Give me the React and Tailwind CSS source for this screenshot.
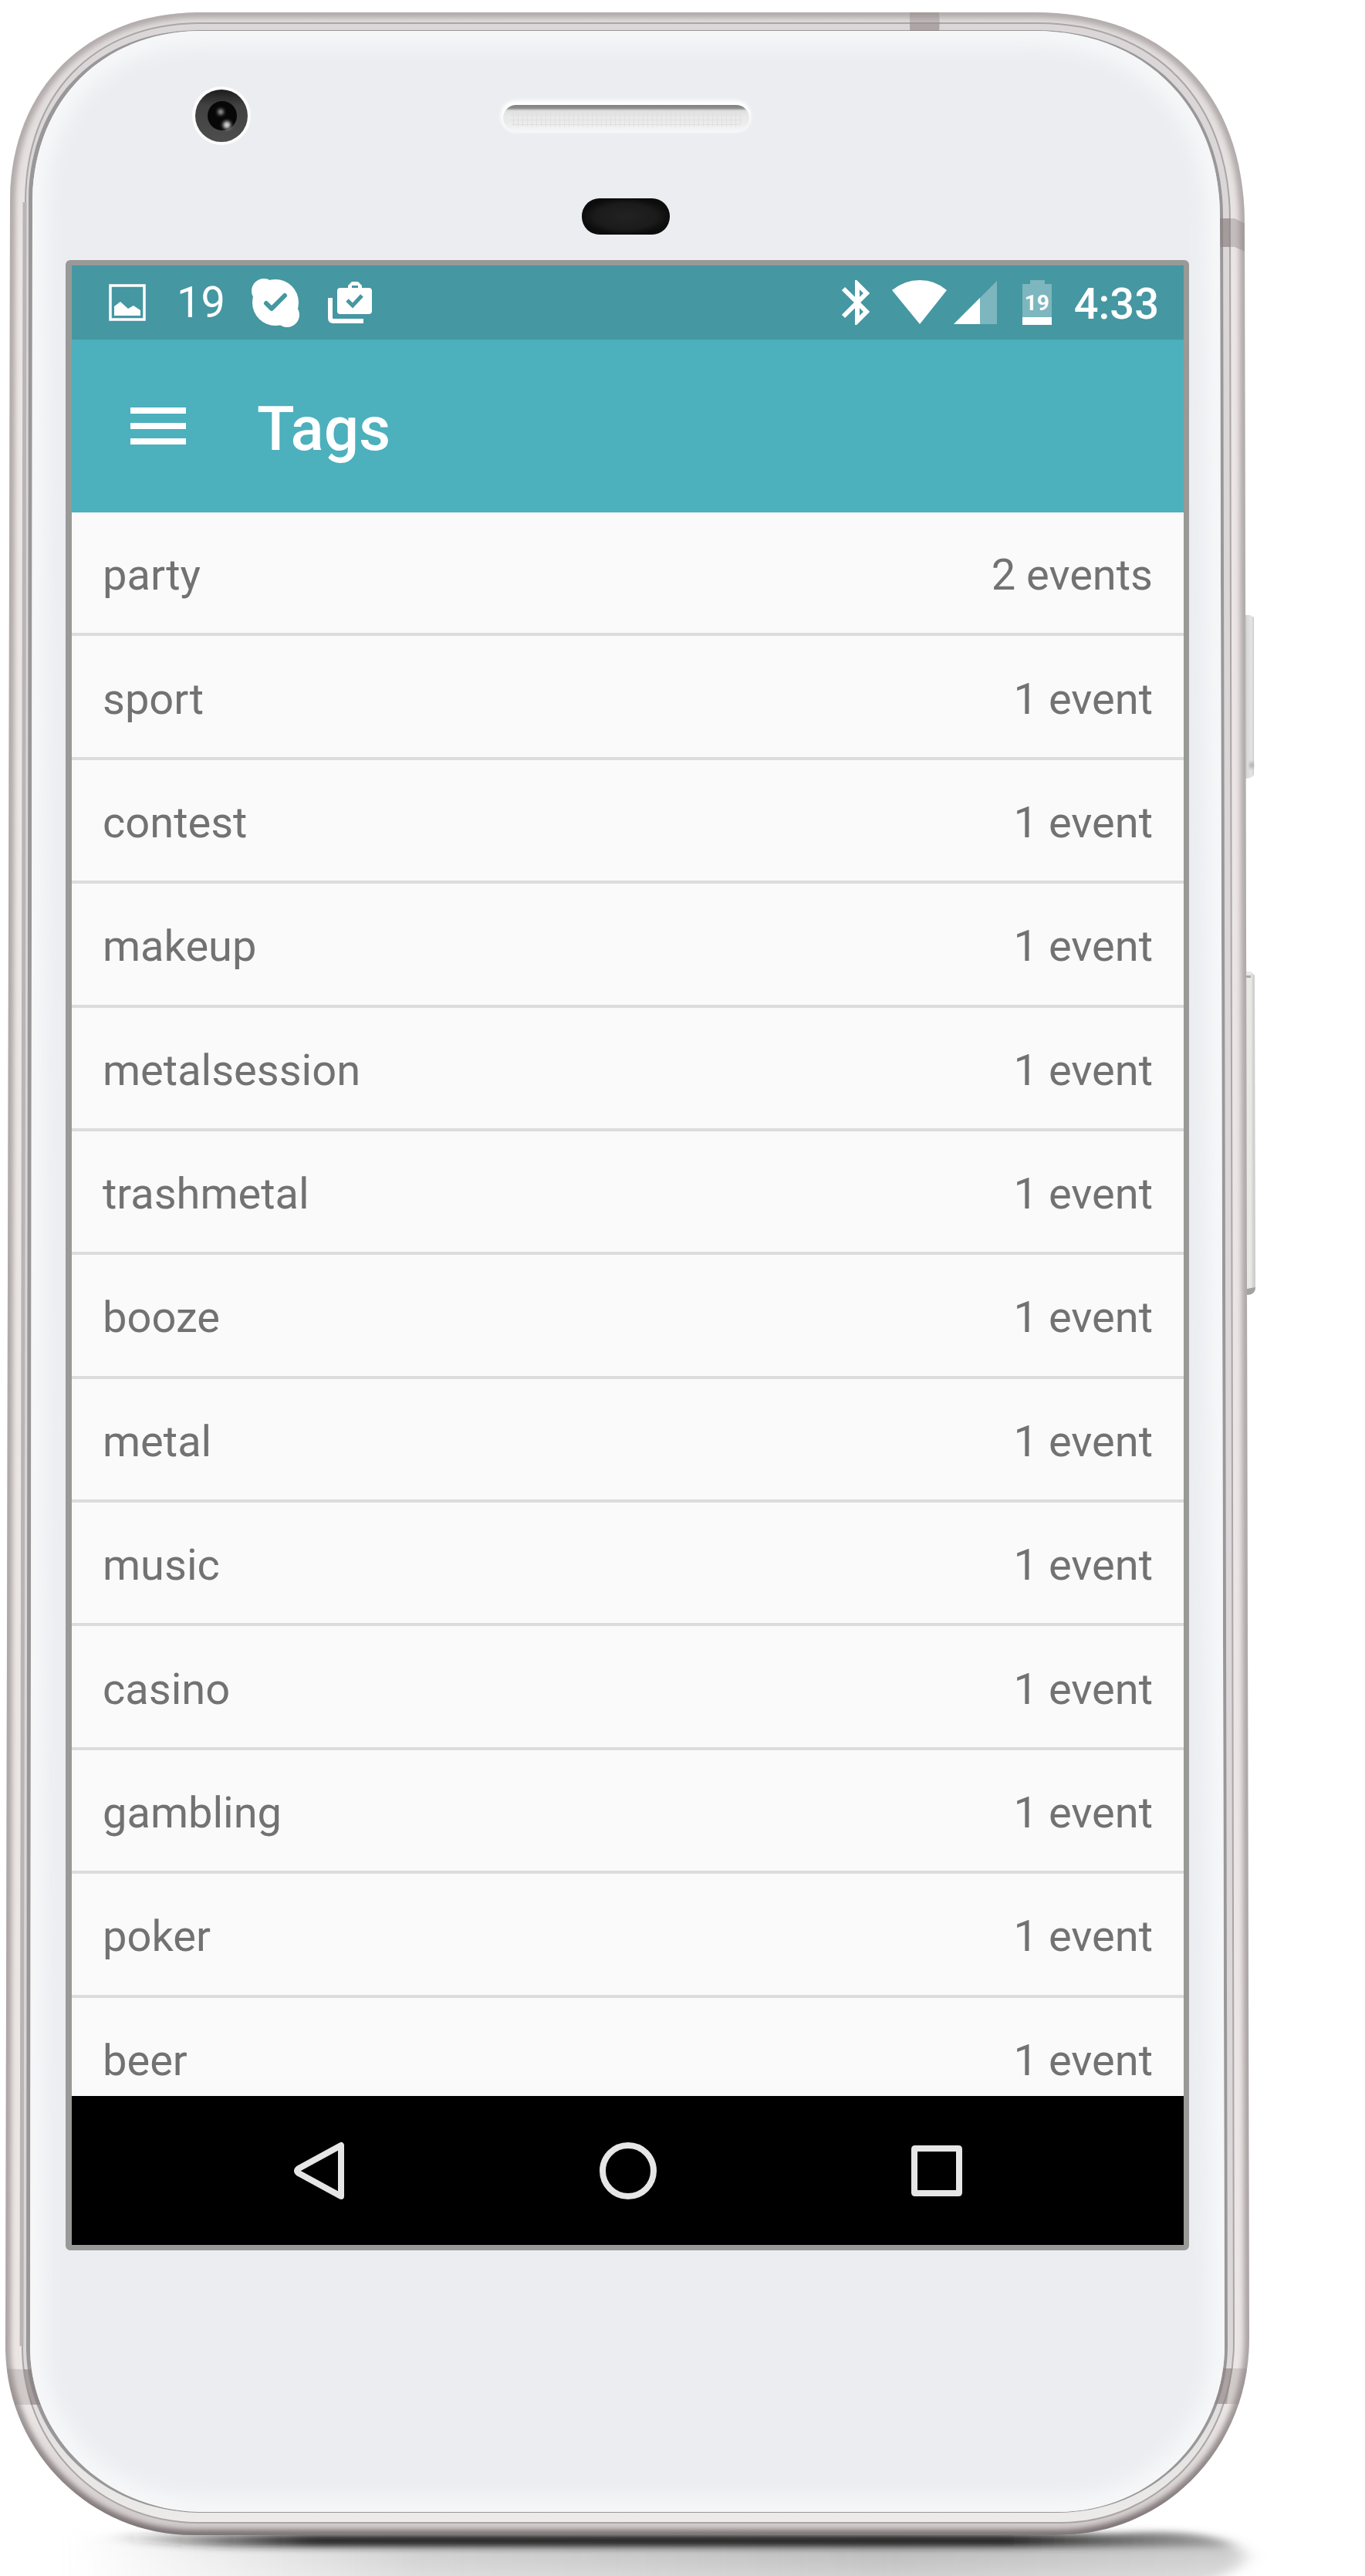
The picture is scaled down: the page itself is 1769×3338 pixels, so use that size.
import React from "react";

const tags = [
  { name: "party", count: 2 },
  { name: "sport", count: 1 },
  { name: "contest", count: 1 },
  { name: "makeup", count: 1 },
  { name: "metalsession", count: 1 },
  { name: "trashmetal", count: 1 },
  { name: "booze", count: 1 },
  { name: "metal", count: 1 },
  { name: "music", count: 1 },
  { name: "casino", count: 1 },
  { name: "gambling", count: 1 },
  { name: "poker", count: 1 },
  { name: "beer", count: 1 },
];

const OUTER =
  "M260 16 H1340 C1509 16 1613 120 1613 290 L1619 3030 C1619 3171 1512 3285 1370 3285 H250 C116 3285 7 3175 7 3040 L13 263 C13 115 112 16 260 16 Z";
const GROOVE =
  "M260 30 H1345 C1500 30 1594 135 1594 285 L1599 3035 C1599 3165 1500 3269 1374 3269 H258 C126 3269 29 3165 29 3042 L33 262 C33 124 120 30 260 30 Z";
const BEZEL =
  "M260 39 H1342 C1490 39 1585 140 1585 280 L1591 3040 C1591 3160 1495 3256 1370 3256 H262 C133 3256 34 3160 34 3042 L37 262 C37 128 128 39 260 39 Z";
const GLASS =
  "M262 40 H1340 C1485 40 1581 140 1581 280 L1587 3040 C1587 3158 1492 3255 1370 3255 H264 C138 3255 39 3158 39 3042 L42 264 C42 132 132 40 262 40 Z";

function PhoneBody() {
  return (
    <svg
      className="absolute inset-0 h-full w-full"
      viewBox="0 0 1769 3338"
      preserveAspectRatio="none"
      aria-hidden="true"
    >
      <defs>
        <clipPath id="outer"><path d={OUTER} /></clipPath>
        <clipPath id="glass"><path d={GLASS} /></clipPath>
        <filter id="b3" x="-5%" y="-5%" width="110%" height="110%"><feGaussianBlur stdDeviation="3" /></filter>
        <filter id="b2" x="-50%" y="-50%" width="200%" height="200%"><feGaussianBlur stdDeviation="2" /></filter>
        <filter id="b14" x="-5%" y="-5%" width="110%" height="110%"><feGaussianBlur stdDeviation="12" /></filter>
        <filter id="shade" x="-20%" y="-80%" width="140%" height="260%"><feGaussianBlur stdDeviation="12 5" /></filter>
        <linearGradient id="edge" x1="0" y1="0" x2="0" y2="1">
          <stop offset="0" stopColor="#b3acac" />
          <stop offset="0.93" stopColor="#aca5a5" />
          <stop offset="1" stopColor="#7d7476" />
        </linearGradient>
        <linearGradient id="rim" x1="0" y1="0" x2="0" y2="1">
          <stop offset="0" stopColor="#dedada" />
          <stop offset="0.1" stopColor="#ebe6e5" />
          <stop offset="0.95" stopColor="#ebe6e5" />
          <stop offset="1" stopColor="#cfc8c8" />
        </linearGradient>
        <linearGradient id="lip" x1="0" y1="0" x2="0" y2="1">
          <stop offset="0.93" stopColor="#dbd7d9" />
          <stop offset="1" stopColor="#edebea" />
        </linearGradient>
        <linearGradient id="far" x1="0" y1="0" x2="1" y2="0">
          <stop offset="0" stopColor="#bdbdbd" stopOpacity="0" />
          <stop offset="0.3" stopColor="#b4b4b4" stopOpacity="0.75" />
          <stop offset="0.7" stopColor="#b0b0b0" />
          <stop offset="1" stopColor="#c4c4c4" />
        </linearGradient>
        <linearGradient id="farDown" x1="0" y1="3285" x2="0" y2="3338" gradientUnits="userSpaceOnUse">
          <stop offset="0" stopColor="#fff" stopOpacity="0" />
          <stop offset="1" stopColor="#fff" stopOpacity="0.4" />
        </linearGradient>
        <linearGradient id="near" x1="0" y1="0" x2="1" y2="0">
          <stop offset="0" stopColor="#222" stopOpacity="0" />
          <stop offset="0.18" stopColor="#222" />
          <stop offset="0.8" stopColor="#222" />
          <stop offset="1" stopColor="#777" stopOpacity="0.45" />
        </linearGradient>
        <linearGradient id="speaker" x1="0" y1="0" x2="0" y2="1">
          <stop offset="0" stopColor="#838383" />
          <stop offset="0.12" stopColor="#8c8c8c" />
          <stop offset="0.22" stopColor="#dedede" />
          <stop offset="0.4" stopColor="#e8e8e8" />
          <stop offset="0.7" stopColor="#ececec" />
          <stop offset="1" stopColor="#f5f6f8" />
        </linearGradient>
        <radialGradient id="sensor">
          <stop offset="0" stopColor="#222" />
          <stop offset="0.7" stopColor="#1b1b1b" />
          <stop offset="1" stopColor="#0c0c0c" />
        </radialGradient>
        <linearGradient id="lens" x1="0" y1="0" x2="0" y2="1">
          <stop offset="0" stopColor="#1c1c1c" />
          <stop offset="0.3" stopColor="#414141" />
          <stop offset="1" stopColor="#4d4d4d" />
        </linearGradient>
        <linearGradient id="power" x1="0" y1="0" x2="1" y2="0">
          <stop offset="0" stopColor="#b5b5b5" />
          <stop offset="0.4" stopColor="#dadada" />
          <stop offset="0.8" stopColor="#e4e4e4" />
          <stop offset="1" stopColor="#c9c9c9" />
        </linearGradient>
        <linearGradient id="volume" x1="0" y1="0" x2="1" y2="0">
          <stop offset="0" stopColor="#b9b9b9" />
          <stop offset="0.2" stopColor="#e8eae5" />
          <stop offset="0.6" stopColor="#e6e8e4" />
          <stop offset="0.75" stopColor="#d6d6d6" />
          <stop offset="1" stopColor="#c9c9c9" />
        </linearGradient>
        <pattern id="mesh" width="6" height="6" patternUnits="userSpaceOnUse">
          <path d="M0 5.5 H6 M5.5 0 V6" stroke="#e0e0e0" strokeWidth="1" />
        </pattern>
      </defs>

      {/* ground shadow */}
      <path d="M90 3285 H1480 C1560 3278 1612 3300 1614 3312 C1612 3330 1570 3350 1500 3360 H90 Z" fill="url(#far)" filter="url(#shade)" />
      <rect y="3285" width="1769" height="53" fill="url(#farDown)" />
      <path d="M140 3284 H1440 C1540 3276 1590 3288 1600 3300 H300 Q200 3298 140 3290 Z" fill="url(#near)" filter="url(#shade)" />

      {/* side buttons */}
      <path d="M1611 797 H1620 L1625 800 V1002 Q1625 1009 1611 1009 Z" fill="url(#power)" />
      <rect x="1620" y="988" width="4" height="7" fill="#999" filter="url(#b2)" />
      <path d="M1613 1259 H1621 L1626 1264 L1627 1668 Q1627 1678 1615 1678 Z" fill="url(#volume)" />
      <path d="M1616 1670 L1627 1668 Q1627 1678 1615 1678 Z" fill="#a2a2a2" />
      <path d="M1615 1264 h6 v3 h-6 Z" fill="#aaa" />

      {/* metal frame */}
      <path d={OUTER} fill="url(#rim)" />
      <g clipPath="url(#outer)">
        <path d={OUTER} fill="none" stroke="url(#edge)" strokeWidth="14" filter="url(#b3)" />
      </g>
      <path d={GROOVE} fill="url(#lip)" stroke="#aaa6a6" strokeWidth="2" />
      <path d="M28 3040 L32 262" stroke="#b9b5b5" strokeWidth="5" fill="none" />
      <path d={BEZEL} fill="#9a9798" />

      {/* antenna bands */}
      <g clipPath="url(#outer)">
        <path d="M1179 14 h37 q3 14 1 27 h-38 Z" fill="#8d8282" fillOpacity="0.4" />
        <path d="M1179 31 h38 v10 h-38 Z" fill="#8d8282" fillOpacity="0.3" />
        <path d="M1578 283 H1600 L1616 291 V327 L1600 320 H1578 Z" fill="#8d8282" fillOpacity="0.4" />
        <path d="M1578 283 H1594 V320 H1578 Z" fill="#8d8282" fillOpacity="0.5" />
        <path d="M0 3069 L45 3071 L54 3116 H0 Z" fill="#8d8282" fillOpacity="0.28" />
        <path d="M31 3070 L45 3071 L54 3116 H40 Z" fill="#8d8282" fillOpacity="0.55" />
        <path d="M1570 3069 H1625 V3115 H1570 Z" fill="#8d8282" fillOpacity="0.28" />
        <path d="M1570 3069 H1597 L1590 3115 H1570 Z" fill="#8d8282" fillOpacity="0.5" />
      </g>

      {/* front glass */}
      <path d={GLASS} fill="#ecedf1" />
      <g clipPath="url(#glass)">
        <path d={GLASS} fill="none" stroke="#f6f8f9" strokeWidth="36" filter="url(#b14)" />
      </g>

      {/* camera */}
      <circle cx="287" cy="150" r="38" fill="#fcfcfc" />
      <circle cx="287" cy="150" r="34" fill="url(#lens)" />
      <circle cx="288" cy="150" r="19" fill="#070707" />
      <circle cx="286" cy="145" r="3.5" fill="#bbb" filter="url(#b2)" />
      <circle cx="294" cy="162" r="5" fill="#ddd" filter="url(#b2)" />

      {/* earpiece */}
      <rect x="649" y="130" width="324" height="41" rx="20" fill="#fff" filter="url(#b2)" />
      <rect x="652" y="136" width="319" height="34" rx="17" fill="url(#speaker)" />
      <rect x="660" y="144" width="303" height="20" rx="10" fill="url(#mesh)" />

      {/* proximity sensor */}
      <rect x="754" y="257" width="114" height="47" rx="23" fill="url(#sensor)" />
    </svg>
  );
}

function PictureIcon() {
  return (
    <svg className="h-12 w-12" viewBox="0 0 48 48" aria-hidden="true">
      <rect x="2" y="2" width="44" height="44" fill="none" stroke="#fff" strokeWidth="3.5" />
      <path d="M7 41 V29 L15 23 L25 32 L32 28 L41 34 V41 Z" fill="#fff" />
    </svg>
  );
}

function SkypeIcon() {
  return (
    <svg className="h-16 w-16" viewBox="0 0 64 64" aria-hidden="true">
      <circle cx="32" cy="32" r="30" fill="#fff" />
      <circle cx="17" cy="17" r="16" fill="#fff" />
      <circle cx="47" cy="48" r="16" fill="#fff" />
      <path d="M20 33 L27 40 L44 23" fill="none" stroke="#4597a2" strokeWidth="6" strokeLinecap="round" strokeLinejoin="round" />
    </svg>
  );
}

function ShopIcon() {
  return (
    <svg className="h-14 w-[58px]" viewBox="0 0 58 56" aria-hidden="true">
      <path
        d="M17 9 H26 V6 L31 1 H39 L44 6 V9 H53 Q57 9 57 13 V39 Q57 43 53 43 H16 Q12 43 12 39 V13 Q12 9 16 9 Z M31 9 H39 V6 H31 Z"
        fill="#fff"
        fillRule="evenodd"
      />
      <path d="M25 25 L32 32 L44 19" fill="none" stroke="#4597a2" strokeWidth="5" />
      <path d="M3 22 V48 Q3 52 7 52 H46" fill="none" stroke="#fff" strokeWidth="6" />
    </svg>
  );
}

function BluetoothIcon() {
  return (
    <svg className="h-[58px] w-9" viewBox="0 0 36 58" aria-hidden="true">
      <path d="M2 11 L32 41 L20 53 V5 L32 17 L2 47" fill="none" stroke="#fff" strokeWidth="6" />
    </svg>
  );
}

function WifiIcon() {
  return (
    <svg className="h-[58px] w-[72px]" viewBox="0 0 72 58" aria-hidden="true">
      <path d="M36 57 L0 13 Q16 0 36 0 Q56 0 71 13 Z" fill="#fff" />
    </svg>
  );
}

function SignalIcon() {
  return (
    <svg className="h-14 w-14" viewBox="0 0 56 56" aria-hidden="true">
      <path d="M0 56 L56 0 V56 Z" fill="#7db6be" />
      <path d="M0 56 L34 22 V56 Z" fill="#fff" />
    </svg>
  );
}

function Battery() {
  return (
    <div className="relative flex h-[58px] w-[38px] justify-center pt-3">
      <svg className="absolute inset-0 h-full w-full" viewBox="0 0 38 58" aria-hidden="true">
        <path d="M0 5 H10 V0 H29 V5 H38 V48 H0 Z" fill="#7db6be" />
        <rect y="48" width="38" height="10" fill="#fff" />
      </svg>
      <span className="relative text-[28px] leading-9 font-bold">19</span>
    </div>
  );
}

function StatusBar() {
  return (
    <div className="flex h-24 items-center justify-between bg-[#4597a2] pr-8 pl-12 text-[56px] leading-[64px] text-white">
      <div className="flex items-center">
        <PictureIcon />
        <span className="ml-10">19</span>
        <span className="ml-[33px]"><SkypeIcon /></span>
        <span className="ml-9"><ShopIcon /></span>
      </div>
      <div className="flex items-center">
        <BluetoothIcon />
        <span className="ml-[29px]"><WifiIcon /></span>
        <span className="ml-2"><SignalIcon /></span>
        <span className="ml-[33px]"><Battery /></span>
        <time className="ml-[29px] pt-1 font-medium">4:33</time>
      </div>
    </div>
  );
}

function AppBar() {
  return (
    <header className="flex h-[224px] items-center bg-[#4cb0bd] pl-[76px] text-white">
      <button type="button" aria-label="Open menu">
        <svg className="h-12 w-[72px]" viewBox="0 0 72 48" fill="#fff" aria-hidden="true">
          <rect width="72" height="8" />
          <rect y="20" width="72" height="8" />
          <rect y="40" width="72" height="8" />
        </svg>
      </button>
      <h1 className="ml-[92px] pt-2 text-[80px] leading-[96px] font-medium">Tags</h1>
    </header>
  );
}

function TagList() {
  return (
    <div className="h-[2052px] overflow-hidden bg-[#fafafa]">
      <ul className="grid h-[2085px] auto-rows-fr text-[56px] leading-[64px] text-[#727272]">
        {tags.map((tag) => (
          <li key={tag.name} className="flex items-center justify-between border-b-4 border-[#dcdcdc] px-10 pt-[6px]">
            <span>{tag.name}</span>
            <span>{tag.count === 1 ? "1 event" : `${tag.count} events`}</span>
          </li>
        ))}
      </ul>
    </div>
  );
}

function NavBar() {
  return (
    <nav className="flex h-[193px] items-center justify-evenly bg-black">
      <button type="button" aria-label="Back" className="flex h-40 w-40 items-center justify-center">
        <svg className="h-20 w-20" viewBox="0 0 80 80" fill="none" stroke="#e6e6e6" strokeWidth="8" strokeLinejoin="round" aria-hidden="true">
          <path d="M69 7 V73 L14 43 Q10 40 14 37 Z" />
        </svg>
      </button>
      <button type="button" aria-label="Home" className="flex h-40 w-40 items-center justify-center">
        <svg className="h-20 w-20" viewBox="0 0 80 80" fill="none" stroke="#e6e6e6" strokeWidth="8" aria-hidden="true">
          <circle cx="40" cy="40" r="33" />
        </svg>
      </button>
      <button type="button" aria-label="Recent apps" className="flex h-40 w-40 items-center justify-center">
        <svg className="h-20 w-20" viewBox="0 0 80 80" aria-hidden="true">
          <path
            d="M12 7 H68 Q73 7 73 12 V68 Q73 73 68 73 H12 Q7 73 7 68 V12 Q7 7 12 7 Z M15 15 V65 H65 V15 Z"
            fill="#e6e6e6"
            fillRule="evenodd"
          />
        </svg>
      </button>
    </nav>
  );
}

export default function App() {
  return (
    <main className="relative overflow-hidden bg-white pt-[337px] pr-[228px] pb-[422px] pl-[85px] font-[Roboto,sans-serif]">
      <PhoneBody />
      <section className="relative rounded-md border-[7px] border-l-8 border-[#999998]">
        <StatusBar />
        <AppBar />
        <TagList />
        <NavBar />
      </section>
    </main>
  );
}
